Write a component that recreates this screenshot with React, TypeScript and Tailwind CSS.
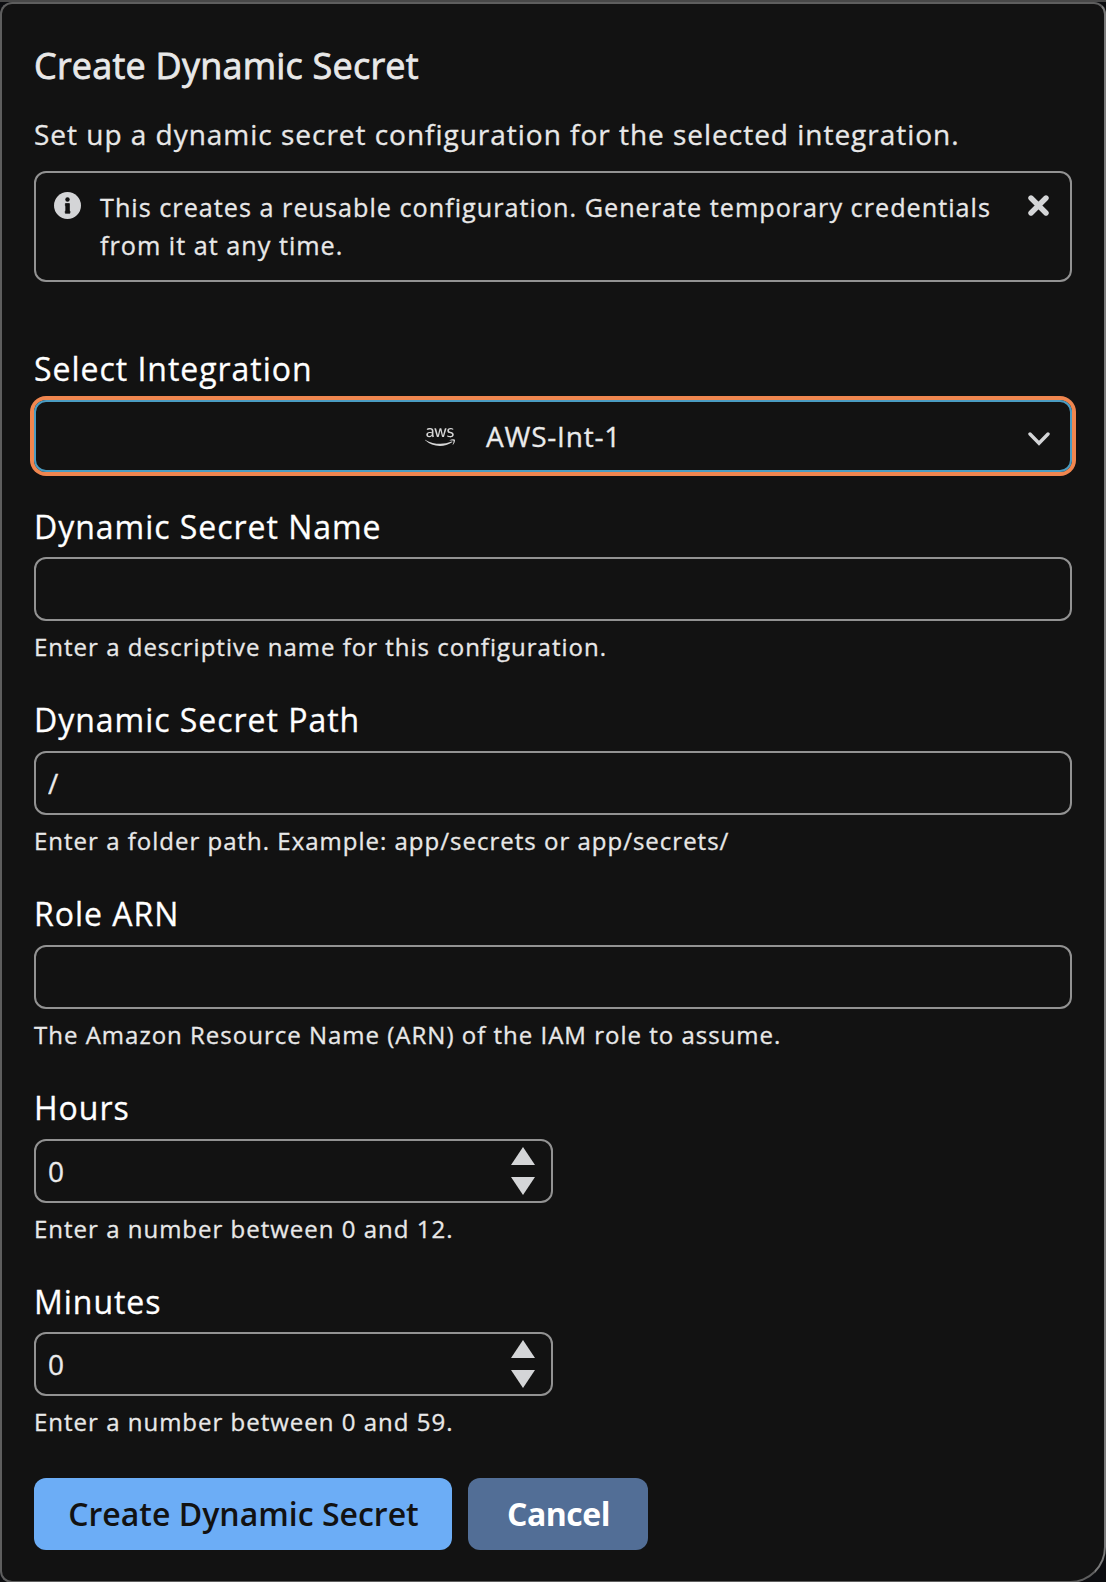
import { useState } from 'react'
import type { ReactNode } from 'react'
import { FaAws } from 'react-icons/fa'

function InfoIcon() {
  return (
    <svg className="h-[27px] w-[27px]" viewBox="0 0 27 27">
      <circle cx="13.5" cy="13.5" r="13.5" fill="#d4d5d7" />
      <circle cx="13.5" cy="7.5" r="2.2" fill="#121212" />
      <path d="M11.4 11.6h4v7.4h.5v2.2h-4.6v-2.2h.5v-5.2h-.4z" fill="#121212" stroke="#121212" strokeWidth="0.8" strokeLinejoin="round" />
    </svg>
  )
}

function CloseIcon() {
  return (
    <svg className="h-[21px] w-[21px]" viewBox="0 0 21 21" stroke="#d4d5d7" strokeWidth="5.4" strokeLinecap="round">
      <path d="M3 3l15 15M18 3L3 18" />
    </svg>
  )
}

function ChevronIcon() {
  return (
    <svg className="h-[14px] w-[22px]" viewBox="0 0 22 14" fill="none" stroke="#d4d5d7" strokeWidth="3.4" strokeLinecap="round" strokeLinejoin="miter">
      <path d="M2 2l9 9.2L20 2" />
    </svg>
  )
}

interface FieldProps {
  label: string
  help: string
  labelGap?: string
  children: ReactNode
}

function Field({ label, help, labelGap = 'mt-[9px]', children }: FieldProps) {
  return (
    <div className="mt-[33px]">
      <label className="block text-[32px] leading-[44px] tracking-[0.97px] text-white">{label}</label>
      <div className={labelGap}>{children}</div>
      <p className="mt-2 text-2xl leading-9 tracking-[1px] text-[#e8e8e8]">{help}</p>
    </div>
  )
}

function TextInput({ value, onChange }: { value: string; onChange: (v: string) => void }) {
  return (
    <input
      type="text"
      value={value}
      onChange={e => onChange(e.target.value)}
      className="block h-16 w-full rounded-xl border-2 border-[#929292] bg-transparent px-3 text-[28px] tracking-[1px] text-[#ebebeb] outline-none"
    />
  )
}

function NumberInput({ value, max, onChange }: { value: number; max: number; onChange: (v: number) => void }) {
  return (
    <div className="flex h-16 w-[519px] items-center justify-between rounded-xl border-2 border-[#929292] pl-3 pr-4">
      <span className="text-[28px] leading-[42px] tracking-[1px] text-[#ebebeb]">{value}</span>
      <div className="flex flex-col gap-3">
        <button type="button" aria-label="Increase" onClick={() => onChange(Math.min(max, value + 1))}>
          <svg className="block h-[18px] w-6" viewBox="0 0 24 18" fill="#d4d5d7"><path d="M12 0l12 18H0z" /></svg>
        </button>
        <button type="button" aria-label="Decrease" onClick={() => onChange(Math.max(0, value - 1))}>
          <svg className="block h-[18px] w-6" viewBox="0 0 24 18" fill="#d4d5d7"><path d="M12 18L0 0h24z" /></svg>
        </button>
      </div>
    </div>
  )
}

export default function App() {
  const [name, setName] = useState('')
  const [path, setPath] = useState('/')
  const [role, setRole] = useState('')
  const [hours, setHours] = useState(0)
  const [minutes, setMinutes] = useState(0)
  const [showInfo, setShowInfo] = useState(true)

  return (
    <div className="h-[1582px] w-[1106px] overflow-hidden border-t-2 border-[#484848] bg-[#0c0d10] font-['Open_Sans',sans-serif] [-webkit-text-stroke:0.3px]">
      <div className="h-[1581px] rounded-t-xl rounded-bl-xl rounded-br-[36px] border-2 border-[#5e5e5e] border-r-[#7b7b7b] bg-[#121212] px-8 pt-[37px]">
        <h1 className="text-4xl leading-[50px] tracking-[0.22px] text-[#e8e8e8] [-webkit-text-stroke:0.8px]">Create Dynamic Secret</h1>
        <p className="mt-[22px] text-[28px] leading-[42px] tracking-[0.98px] text-[#e8e8e8]">
          Set up a dynamic secret configuration for the selected integration.
        </p>

        {/* Info banner */}
        {showInfo && (
          <div className="mt-4 flex h-[111px] items-start rounded-xl border-2 border-[#929292] pl-[18px] pr-[21px] pt-[15px]">
            <div className="mt-[3.5px] shrink-0"><InfoIcon /></div>
            <p className="ml-[19px] w-[900px] text-[25.2px] leading-[38px] tracking-[1.01px] text-[#e8e8e8]">
              This creates a reusable configuration. Generate temporary credentials from it at any time.
            </p>
            <button type="button" aria-label="Close" className="ml-auto mt-[6.5px]" onClick={() => setShowInfo(false)}>
              <CloseIcon />
            </button>
          </div>
        )}

        {/* Integration select */}
        <div className="mt-[65px]">
          <label className="block text-[32px] leading-[44px] tracking-[0.97px] text-white">Select Integration</label>
          <button
            type="button"
            className="mt-[9px] flex h-[72px] w-full items-center rounded-xl border-2 border-[#4a9cc2] pl-[389px] pr-5 text-[#ebebeb] ring-4 ring-[#f0864f]"
          >
            <FaAws className="mt-px h-[30px] w-[30px] text-[#d6d6d6]" />
            <span className="ml-[31px] text-[28px] leading-[42px] tracking-[0.8px]">AWS-Int-1</span>
            <span className="ml-auto mt-[5px]"><ChevronIcon /></span>
          </button>
        </div>

        <Field label="Dynamic Secret Name" help="Enter a descriptive name for this configuration." labelGap="mt-2">
          <TextInput value={name} onChange={setName} />
        </Field>
        <Field label="Dynamic Secret Path" help="Enter a folder path. Example: app/secrets or app/secrets/">
          <TextInput value={path} onChange={setPath} />
        </Field>
        <Field label="Role ARN" help="The Amazon Resource Name (ARN) of the IAM role to assume.">
          <TextInput value={role} onChange={setRole} />
        </Field>
        <Field label="Hours" help="Enter a number between 0 and 12.">
          <NumberInput value={hours} max={12} onChange={setHours} />
        </Field>
        <Field label="Minutes" help="Enter a number between 0 and 59." labelGap="mt-2">
          <NumberInput value={minutes} max={59} onChange={setMinutes} />
        </Field>

        {/* Actions */}
        <div className="mt-[38px] flex gap-4">
          <button type="button" className="h-[72px] w-[418px] rounded-xl bg-[#6cadf6] pl-px text-[32px] font-semibold text-[#121212] [-webkit-text-stroke:0]">
            Create Dynamic Secret
          </button>
          <button type="button" className="h-[72px] w-[180px] rounded-xl bg-[#526e96] pl-px text-[32px] font-bold tracking-[-0.5px] text-white [-webkit-text-stroke:0]">
            Cancel
          </button>
        </div>
      </div>
    </div>
  )
}
